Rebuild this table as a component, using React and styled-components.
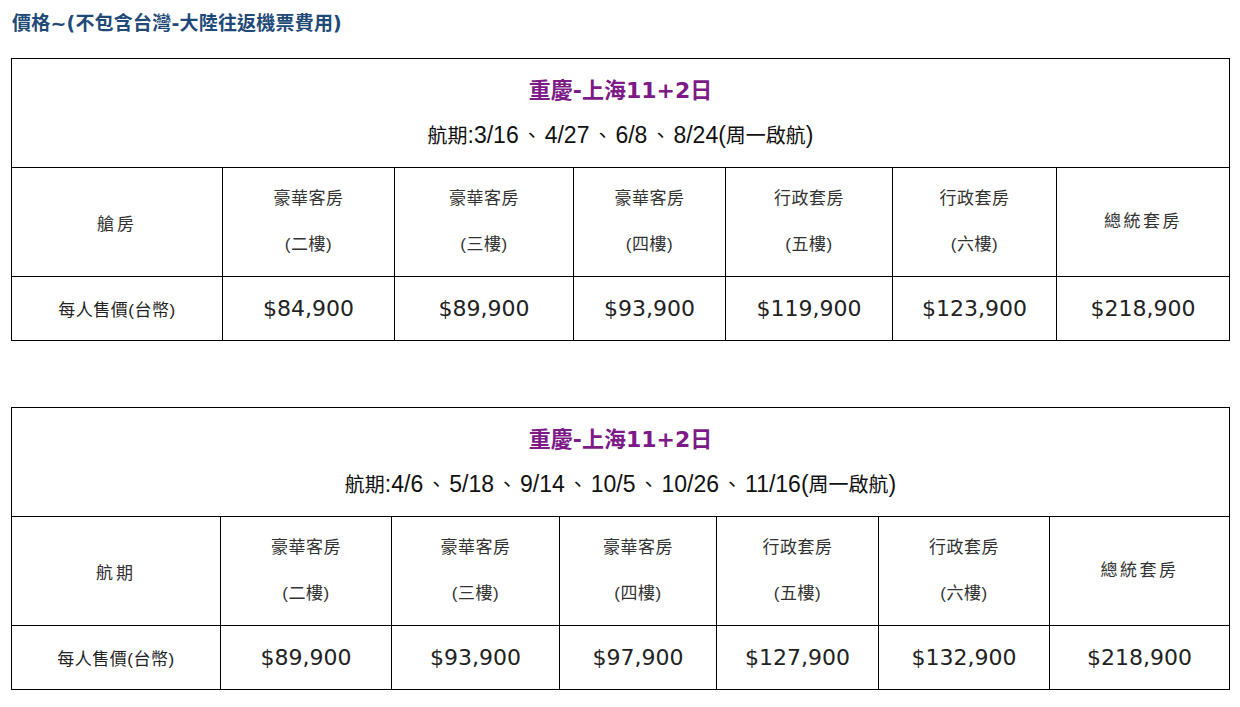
import React from "react";
import styled, { createGlobalStyle } from "styled-components";

const sailings = [
  {
    title: "重慶-上海11+2日",
    dates: ["3/16", "4/27", "6/8", "8/24"],
    firstHead: "艙房",
    widths: [211, 172, 179, 152, 167, 164, 173],
    prices: ["$84,900", "$89,900", "$93,900", "$119,900", "$123,900", "$218,900"],
  },
  {
    title: "重慶-上海11+2日",
    dates: ["4/6", "5/18", "9/14", "10/5", "10/26", "11/16"],
    firstHead: "航期",
    widths: [209, 171, 168, 157, 162, 171, 180],
    prices: ["$89,900", "$93,900", "$97,900", "$127,900", "$132,900", "$218,900"],
  },
];

const rooms = [
  ["豪華客房", "(二樓)"],
  ["豪華客房", "(三樓)"],
  ["豪華客房", "(四樓)"],
  ["行政套房", "(五樓)"],
  ["行政套房", "(六樓)"],
  ["總統套房"],
];

const App = () => {
  return (
    <>
      <GlobalStyle />
      <Page>
        <Heading>價格~(不包含台灣-大陸往返機票費用)</Heading>
        {sailings.map((s, i) => (
          <PriceTable key={i}>
            <colgroup>
              {s.widths.map((w, j) => (
                <col key={j} style={{ width: w }} />
              ))}
            </colgroup>
            <tbody>
              <tr>
                <TitleCell colSpan={7}>
                  <Title>{s.title}</Title>
                  <Schedule>
                    <Han>航期</Han>:
                    {s.dates.map((d, j) => (
                      <React.Fragment key={j}>
                        {j > 0 && <Sep>、</Sep>}
                        {d}
                      </React.Fragment>
                    ))}
                    (<Han>周一啟航</Han>)
                  </Schedule>
                </TitleCell>
              </tr>
              <HeadRow>
                <HeadCell $spacing={3}>{s.firstHead}</HeadCell>
                {rooms.map((r, j) => (
                  <HeadCell key={j} $spacing={r.length === 1 ? 2.5 : 0.5}>
                    {r.map((line, k) => (
                      <Line key={k}>{line}</Line>
                    ))}
                  </HeadCell>
                ))}
              </HeadRow>
              <PriceRow>
                <LabelCell>每人售價(台幣)</LabelCell>
                {s.prices.map((p, j) => (
                  <PriceCell key={j}>{p}</PriceCell>
                ))}
              </PriceRow>
            </tbody>
          </PriceTable>
        ))}
      </Page>
    </>
  );
};

export default App;

const GlobalStyle = createGlobalStyle`
  body {
    margin: 0;
    background: #ffffff;
    font-family: "Liberation Sans", "Noto Sans CJK TC", sans-serif;
  }
`;

const Page = styled.div`
  padding: 10px 11px 0 11px;
  display: flex;
  flex-direction: column;
  gap: 66px;
`;

const Heading = styled.h3`
  margin: 0 0 -44px 1px;
  font-family: "DejaVu Sans", "Noto Sans CJK TC", sans-serif;
  font-size: 19px;
  line-height: 26px;
  font-weight: bold;
  letter-spacing: 0.2px;
  color: #1f4a78;
`;

const PriceTable = styled.table`
  width: 1218px;
  table-layout: fixed;
  border-collapse: collapse;
  color: #222;

  td {
    border: 1px solid #000;
    text-align: center;
    vertical-align: middle;
    padding: 0;
  }
`;

const TitleCell = styled.td`
  height: 108px;
`;

const Title = styled.div`
  font-family: "DejaVu Sans", "Noto Sans CJK TC", sans-serif;
  font-size: 22px;
  font-weight: bold;
  line-height: 28px;
  color: #7d1a87;
`;

const Schedule = styled.div`
  margin-top: 16px;
  font-size: 23px;
  line-height: 28px;
  color: #111;
`;

const Han = styled.span`
  font-size: 20px;
`;

const Sep = styled.span`
  font-size: 20px;
  margin: 0 3px;
`;

const HeadRow = styled.tr`
  height: 109px;
`;

const HeadCell = styled.td`
  font-size: 17px;
  color: #333;
  letter-spacing: ${(p) => p.$spacing}px;
`;

const Line = styled.div`
  line-height: 46px;
`;

const PriceRow = styled.tr`
  height: 64px;
`;

const LabelCell = styled.td`
  font-size: 17px;
  letter-spacing: 0.5px;
  color: #222;
`;

const PriceCell = styled.td`
  font-family: "DejaVu Sans", sans-serif;
  font-size: 22px;
  color: #222;
`;
